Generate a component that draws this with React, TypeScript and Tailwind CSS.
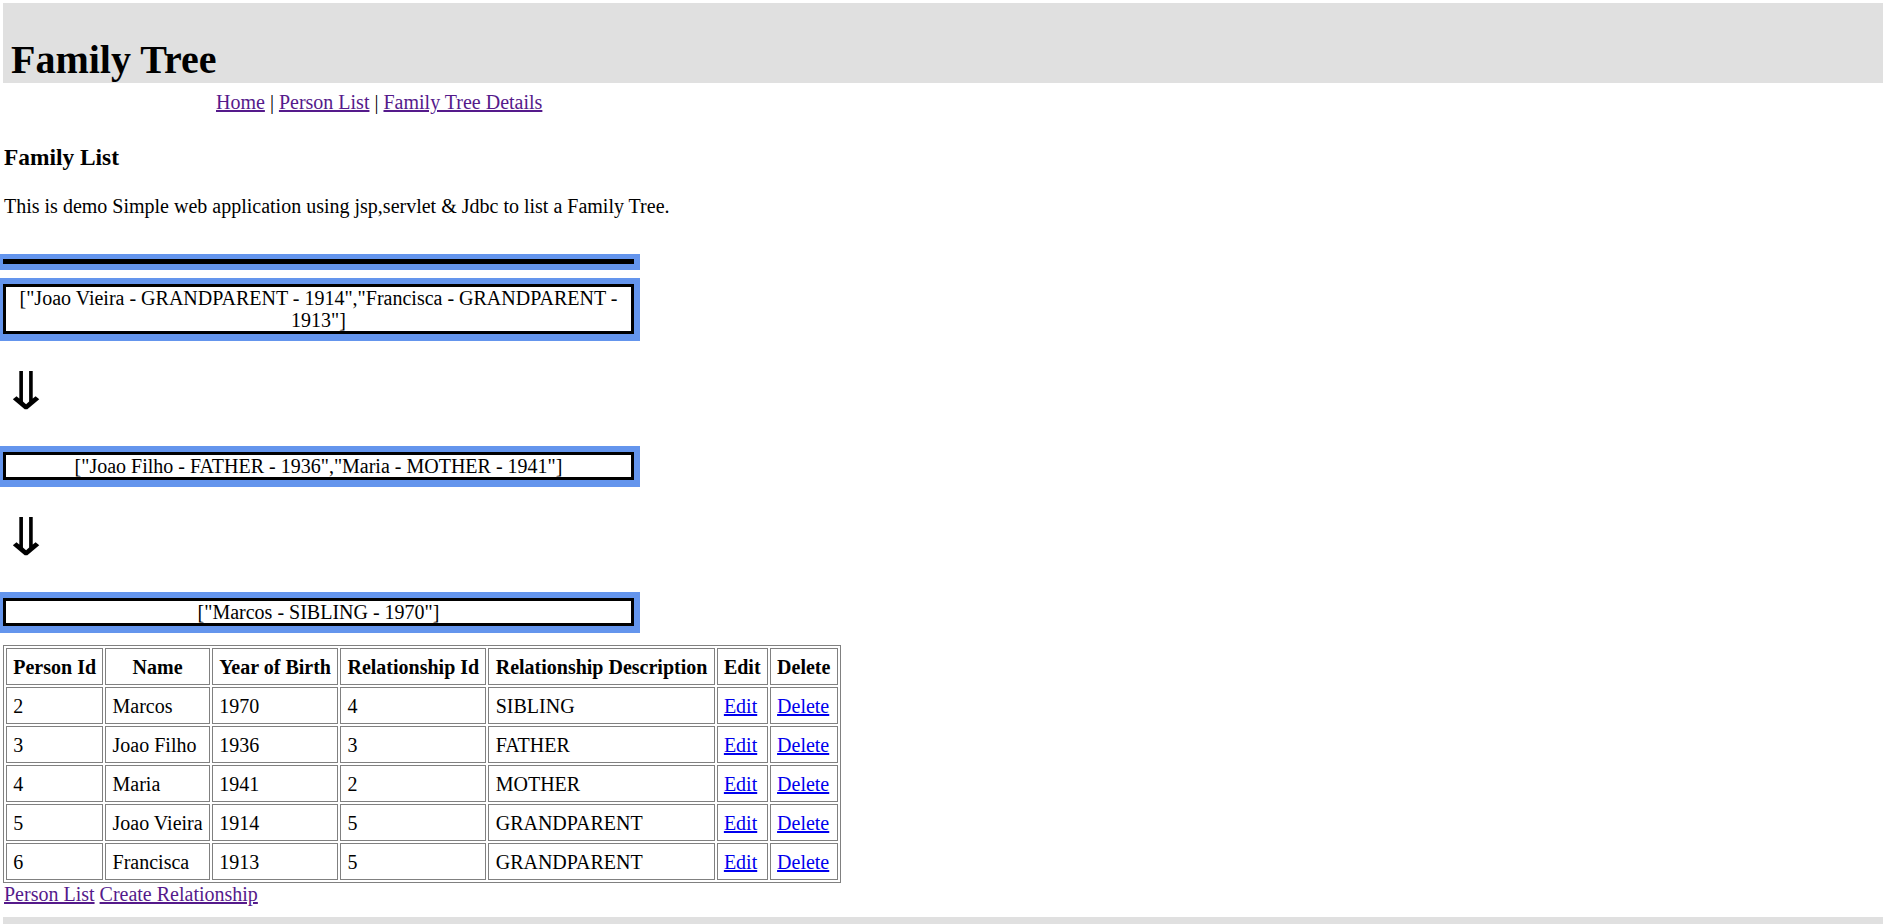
import React from "react";

const rows: string[][] = [
  ["2", "Marcos", "1970", "4", "SIBLING"],
  ["3", "Joao Filho", "1936", "3", "FATHER"],
  ["4", "Maria", "1941", "2", "MOTHER"],
  ["5", "Joao Vieira", "1914", "5", "GRANDPARENT"],
  ["6", "Francisca", "1913", "5", "GRANDPARENT"],
];

function Box({ children }: { children: React.ReactNode }) {
  return (
    <div className="w-[640px] bg-[#6495ed] pt-[6px] pb-[7px] pl-[3px] pr-[6px]">
      <div className="border-[3px] border-black bg-white text-center leading-[22px]">{children}</div>
    </div>
  );
}

function Arrow() {
  return (
    <div className="h-[105px] pt-[20px]">
      <div className="font-['DejaVu_Sans',sans-serif] text-[52px] leading-[60px]">
        <span className="inline-block origin-left scale-x-[1.2]">⇓</span>
      </div>
    </div>
  );
}

export default function App() {
  const th = "border border-[#808080] px-[6.25px] py-[6.5px] font-bold text-center leading-[22px]";
  const td = "border border-[#808080] px-[6.25px] py-[6.5px] text-left leading-[22px]";
  return (
    <div className="h-[924px] overflow-hidden bg-white text-black font-['Liberation_Serif','Times_New_Roman',serif] text-[20px] leading-[22px] pt-[3px]">
      <div className="ml-[3px] w-[1880px] h-[80px] bg-[#e0e0e0] flex items-end pb-[1px] pl-[8px]">
        <h1 className="text-[40px] font-bold leading-[44px]">Family Tree</h1>
      </div>
      <div className="mt-[8px] ml-[216px]">
        <a href="#" className="text-[#551a8b] underline">Home</a> |{" "}
        <a href="#" className="text-[#551a8b] underline">Person List</a> |{" "}
        <a href="#" className="text-[#551a8b] underline">Family Tree Details</a>
      </div>
      <h3 className="mt-[31px] ml-[4px] text-[23.4px] font-bold leading-[26px]">Family List</h3>
      <p className="mt-[25px] ml-[4px]">This is demo Simple web application using jsp,servlet &amp; Jdbc to list a Family Tree.</p>
      <div className="mt-[37px] w-[640px] bg-[#6495ed] pt-[5px] pb-[6px] pl-[3px] pr-[6px]">
        <div className="h-[5px] bg-black"></div>
      </div>
      <div className="mt-[8px]">
        <Box>["Joao Vieira - GRANDPARENT - 1914","Francisca - GRANDPARENT - 1913"]</Box>
      </div>
      <Arrow />
      <Box>["Joao Filho - FATHER - 1936","Maria - MOTHER - 1941"]</Box>
      <Arrow />
      <Box>["Marcos - SIBLING - 1970"]</Box>
      <table className="mt-[12px] ml-[3px] border border-[#808080] border-separate border-spacing-x-[2.5px] border-spacing-y-[2px]">
        <thead>
          <tr>
            <th className={th}>Person Id</th>
            <th className={th}>Name</th>
            <th className={th}>Year of Birth</th>
            <th className={th}>Relationship Id</th>
            <th className={th}>Relationship Description</th>
            <th className={th}>Edit</th>
            <th className={th}>Delete</th>
          </tr>
        </thead>
        <tbody>
          {rows.map((r) => (
            <tr key={r[0]}>
              {r.map((c, i) => (
                <td key={i} className={td}>{c}</td>
              ))}
              <td className={td}>
                <a href="#" className="text-[#0000ee] underline">Edit</a>
              </td>
              <td className={td}>
                <a href="#" className="text-[#0000ee] underline">Delete</a>
              </td>
            </tr>
          ))}
        </tbody>
      </table>
      <div className="ml-[4px]">
        <a href="#" className="text-[#551a8b] underline">Person List</a>{" "}
        <a href="#" className="text-[#551a8b] underline">Create Relationship</a>
      </div>
      <div className="mt-[12px] ml-[3px] w-[1880px] h-[40px] bg-[#e0e0e0]"></div>
    </div>
  );
}
